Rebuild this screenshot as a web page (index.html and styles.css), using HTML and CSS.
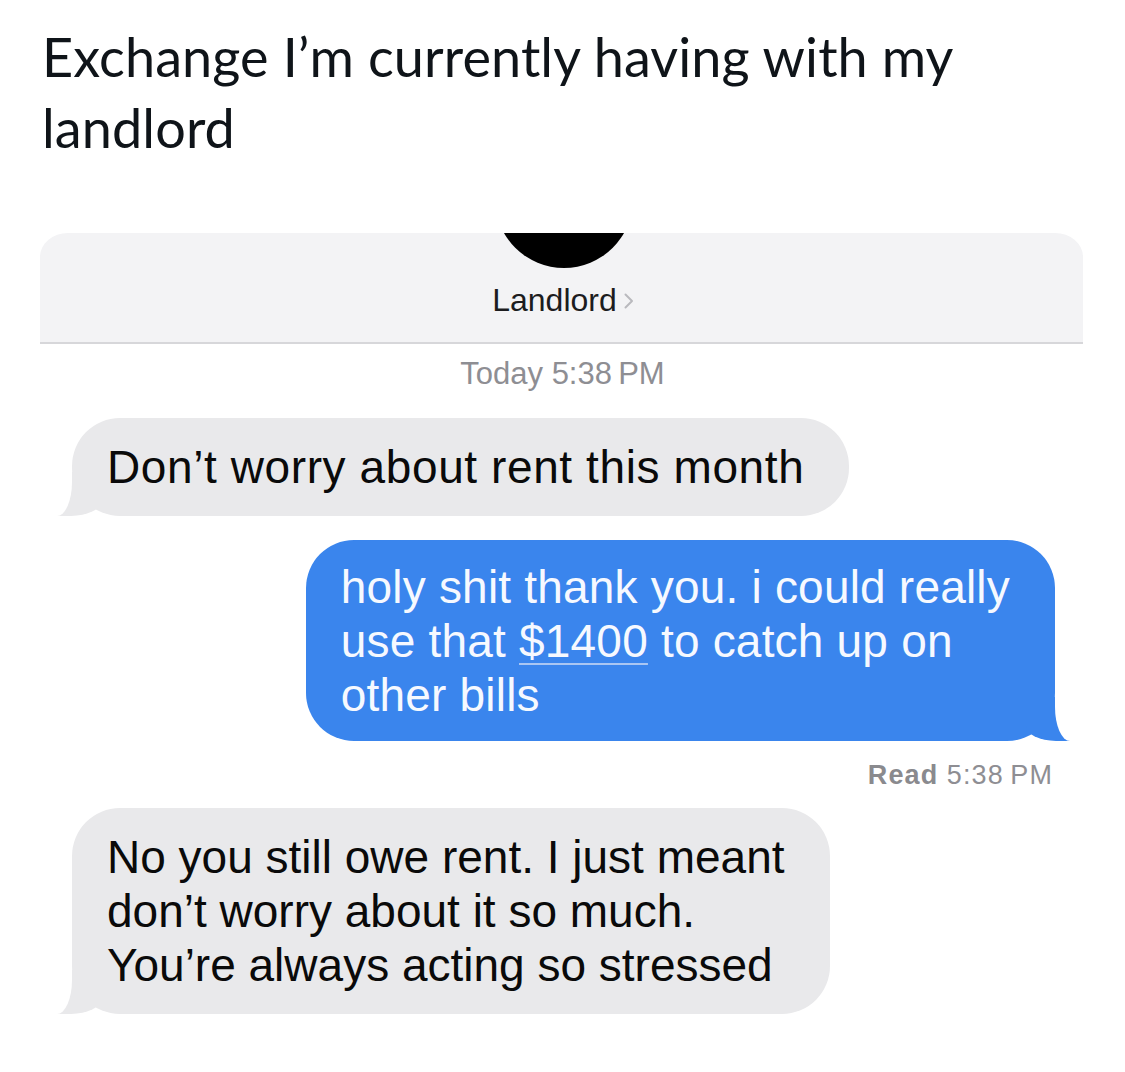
FILE: index.html
```html
<!DOCTYPE html>
<html lang="en">
<head>
<meta charset="utf-8">
<title>Exchange with my landlord</title>
<link rel="stylesheet" href="styles.css">
</head>
<body>
<div class="post">
  <h1 class="title">Exchange I’m currently having with my landlord</h1>
  <div class="chat">
    <div class="header">
      <div class="avatar"></div>
      <div class="name">Landlord<svg class="chev" width="12" height="16" viewBox="0 0 12 16"><path d="M2.5 1.5 L9 8 L2.5 14.5" fill="none" stroke="#b9b9be" stroke-width="2" stroke-linecap="round" stroke-linejoin="round"/></svg></div>
    </div>
    <div class="stamp">Today 5:38&#8201;PM</div>
    <div class="row in">
      <div class="bubble gray b1">Don’t worry about rent this month</div>
    </div>
    <div class="row out">
      <div class="bubble blue">holy shit thank you. i could really<br>use that <span class="link">$1400</span> to catch up on<br>other bills</div>
    </div>
    <div class="read"><span class="read-label">Read</span> 5:38&#8201;PM</div>
    <div class="row in">
      <div class="bubble gray b3">No you still owe rent. I just meant<br>don’t worry about it so much.<br>You’re always acting so stressed</div>
    </div>
  </div>
</div>
</body>
</html>
```

FILE: styles.css
```css
html, body {
  margin: 0;
  padding: 0;
  background: #ffffff;
}

.post {
  width: 1125px;
  min-height: 1072px;
}

.title {
  margin: 0;
  padding: 21px 0 0 42px;
  font-family: Lato, "Liberation Sans", sans-serif;
  font-weight: 400;
  font-size: 54px;
  line-height: 71px;
  color: #0f1419;
  letter-spacing: 0.1px;
}

.chat {
  margin: 70px 42px 0 40px;
  font-family: "Liberation Sans", Arial, sans-serif;
}

.header {
  background: #f3f3f5;
  border-top-left-radius: 28px 24px;
  border-top-right-radius: 28px 24px;
  border-bottom: 2px solid #d7d7da;
  height: 109px;
  overflow: hidden;
  display: flex;
  flex-direction: column;
  align-items: center;
}

.avatar {
  width: 138px;
  height: 138px;
  border-radius: 50%;
  background: #000;
  margin-top: -103px;
  flex: none;
  transform: translateX(2px);
}

.name {
  margin-top: 14px;
  font-size: 32px;
  line-height: 36px;
  color: #1c1c1e;
  display: flex;
  align-items: center;
  gap: 6px;
  transform: translateX(2px);
}

.chev {
  display: block;
  margin-top: 2px;
}

.stamp {
  text-align: center;
  font-size: 31px;
  line-height: 36px;
  color: #8e8e93;
  margin-top: 12px;
  transform: translateX(1px);
}

.row {
  display: flex;
}

.row.in {
  justify-content: flex-start;
  padding-left: 32px;
}

.row.out {
  justify-content: flex-end;
  margin-right: 28px;
}

.bubble {
  position: relative;
  font-size: 46px;
  line-height: 54px;
  border-radius: 48px;
}

.bubble.gray {
  background: #e9e9eb;
  color: #0a0a0a;
  padding: 22px 45px 22px 35px;
}

.b1 {
  margin-top: 26px;
  letter-spacing: 0.6px;
}

.b3 {
  margin-top: 17px;
  padding-top: 21px;
  padding-bottom: 21px;
}

.bubble.blue {
  background: #3a85ed;
  color: #f6f9ff;
  padding: 20px 45px 19px 35px;
  margin-top: 24px;
  letter-spacing: 0.2px;
}

.link {
  text-decoration: underline;
  text-decoration-color: #a9c6f3;
  text-decoration-thickness: 2px;
  text-underline-offset: 6px;
}

/* tails */
.bubble::before,
.bubble::after {
  content: "";
  position: absolute;
  bottom: 0;
  height: 44px;
}

.bubble.gray::before {
  left: -15px;
  width: 44px;
  background: #e9e9eb;
  border-bottom-right-radius: 30px 15px;
}

.bubble.gray::after {
  left: -60px;
  width: 60px;
  background: #ffffff;
  border-bottom-right-radius: 15px 34px;
}

.bubble.blue::before {
  right: -15px;
  width: 44px;
  background: #3a85ed;
  border-bottom-left-radius: 30px 15px;
}

.bubble.blue::after {
  right: -60px;
  width: 60px;
  background: #ffffff;
  border-bottom-left-radius: 15px 34px;
}

.read {
  text-align: right;
  padding-right: 30px;
  margin-top: 18px;
  font-size: 27px;
  line-height: 32px;
  color: #8e8e93;
  letter-spacing: 1.1px;
}

.read-label {
  font-weight: 700;
  color: #8a8a8e;
}
```
